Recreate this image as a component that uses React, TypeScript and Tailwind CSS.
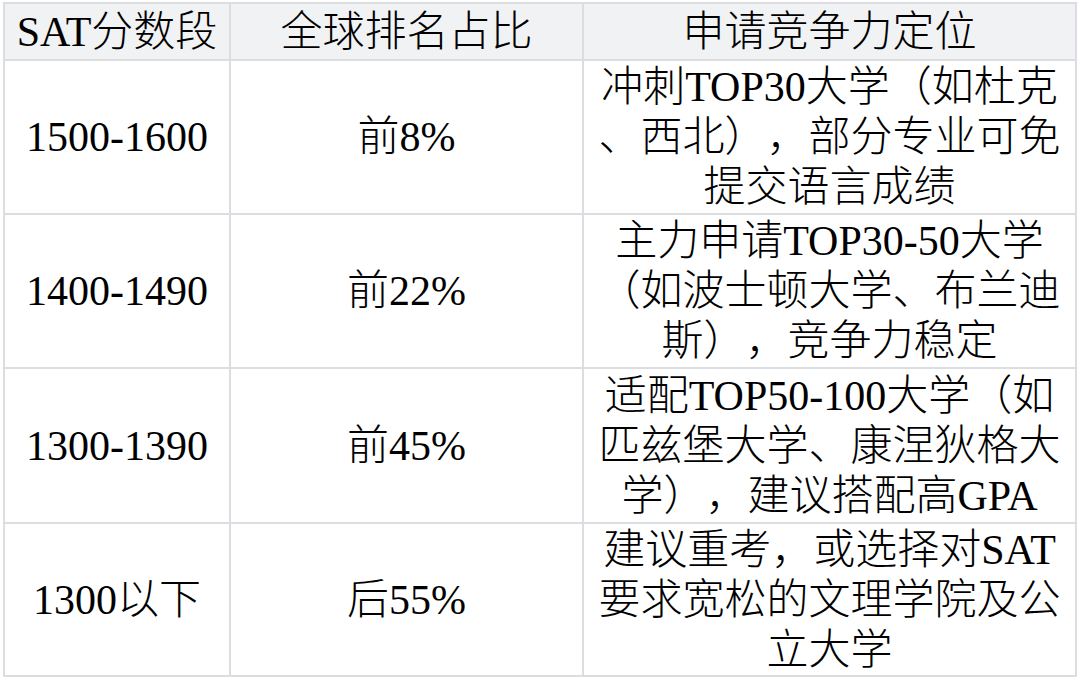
const rows = [
  {
    score: "1500-1600",
    rank: "前8%",
    lines: ["冲刺TOP30大学（如杜克", "、西北），部分专业可免", "提交语言成绩"],
  },
  {
    score: "1400-1490",
    rank: "前22%",
    lines: ["主力申请TOP30-50大学", "（如波士顿大学、布兰迪", "斯），竞争力稳定"],
  },
  {
    score: "1300-1390",
    rank: "前45%",
    lines: ["适配TOP50-100大学（如", "匹兹堡大学、康涅狄格大", "学），建议搭配高GPA"],
  },
  {
    score: "1300以下",
    rank: "后55%",
    lines: ["建议重考，或选择对SAT", "要求宽松的文理学院及公", "立大学"],
  },
];

const heights = ["h-[154px]", "h-[154px]", "h-[155px]", "h-[153px]"];

export default function App() {
  return (
    <div
      className="w-[1080px] h-[680px] bg-white pl-[3px] pt-[2px] text-black overflow-hidden [text-spacing-trim:space-all]"
      style={{ fontFamily: '"Liberation Serif", "Noto Sans CJK SC", serif' }}
    >
      <table className="border-separate border-spacing-0 border-l-2 border-t-2 border-[#dcdde1] text-[42px] leading-[50px] font-light">
        <thead>
          <tr className="h-[57px] bg-[#f1f2f4]">
            <th className="w-[226px] p-0 font-light text-center border-r-2 border-b-2 border-[#dcdde1]">
              SAT分数段
            </th>
            <th className="w-[353px] p-0 font-light text-center border-r-2 border-b-2 border-[#dcdde1]">
              全球排名占比
            </th>
            <th className="w-[493px] p-0 font-light text-center border-r-2 border-b-2 border-[#dcdde1]">
              申请竞争力定位
            </th>
          </tr>
        </thead>
        <tbody>
          {rows.map((r, i) => (
            <tr key={r.score} className={heights[i]}>
              <td className="p-0 text-center align-middle border-r-2 border-b-2 border-[#dcdde1]">
                {r.score}
              </td>
              <td className="p-0 text-center align-middle border-r-2 border-b-2 border-[#dcdde1]">
                {r.rank}
              </td>
              <td className="p-0 text-center align-middle whitespace-nowrap border-r-2 border-b-2 border-[#dcdde1]">
                {r.lines.map((l) => (
                  <div key={l}>{l}</div>
                ))}
              </td>
            </tr>
          ))}
        </tbody>
      </table>
    </div>
  );
}
